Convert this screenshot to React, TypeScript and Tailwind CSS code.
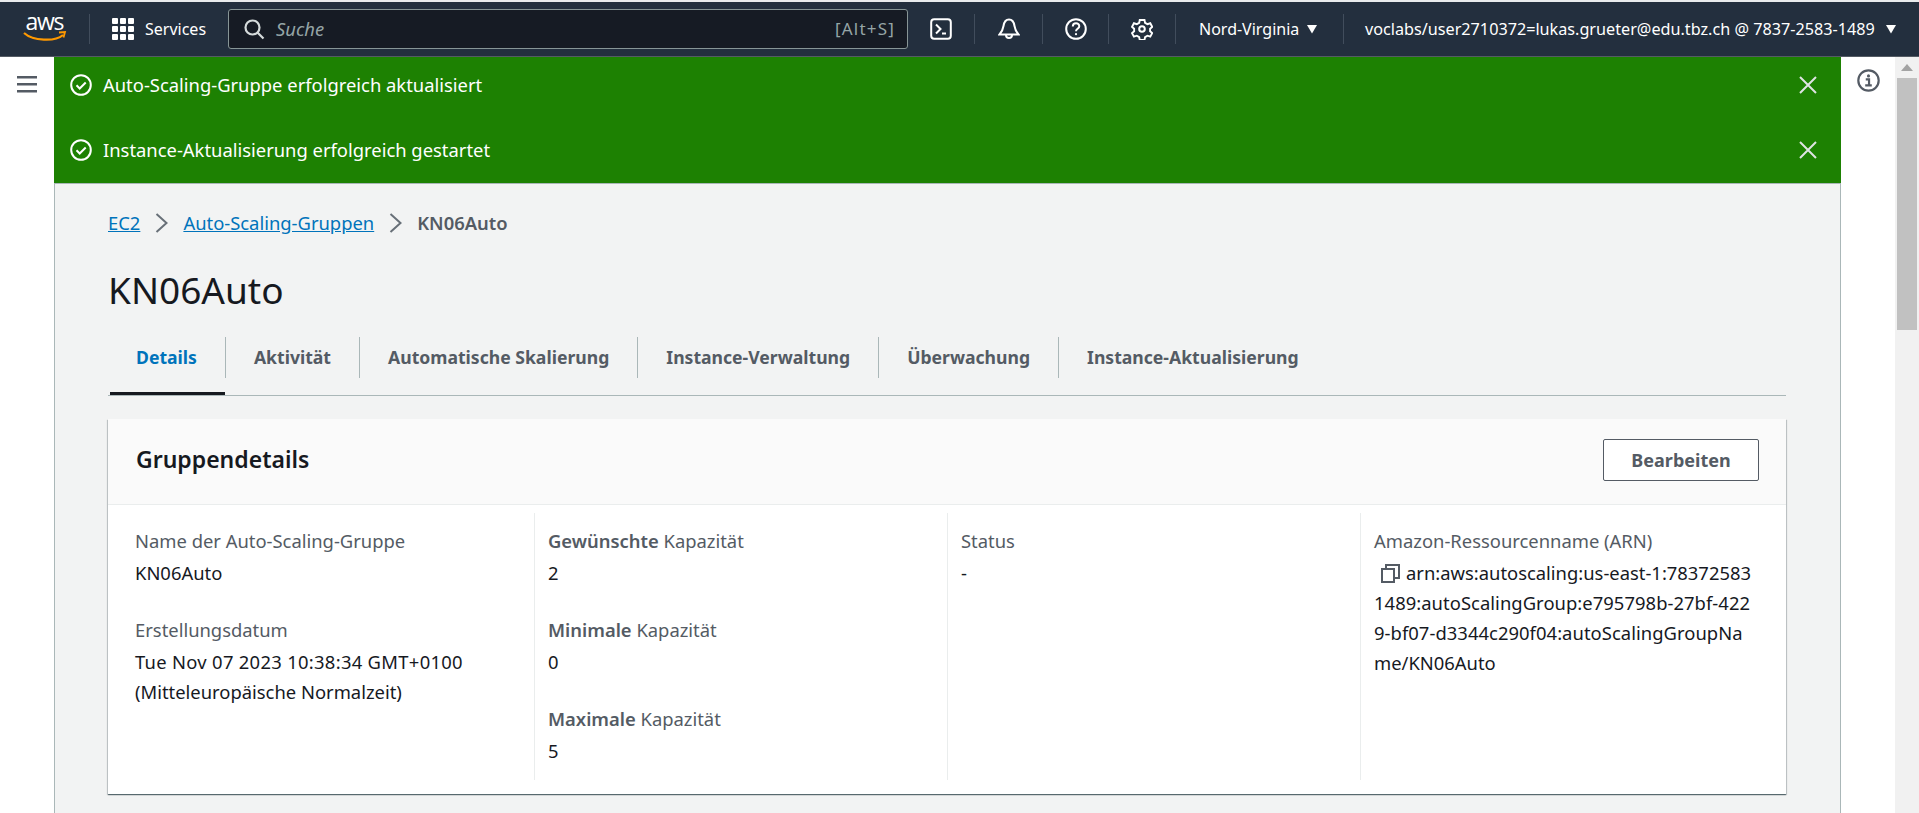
import React from 'react';

const NavDivider = () => <div className="w-px h-[30px] bg-[#414d5c] shrink-0" />;

const Caret = () => (
  <svg className="w-[12px] h-[10px] shrink-0" viewBox="0 0 12 10"><path d="M1 1h10L6 9.5z" fill="#fff" /></svg>
);

const CheckCircle = () => (
  <svg className="w-[22px] h-[22px] shrink-0" viewBox="0 0 22 22" fill="none" stroke="#fff" strokeWidth={2}>
    <circle cx="11" cy="11" r="9.8" />
    <path d="M6.5 11.3l3.2 3.2 6-6" />
  </svg>
);

const Chevron = () => (
  <svg className="w-[13px] h-[20px] mx-[15px] shrink-0" viewBox="0 0 13 20" fill="none" stroke="#687078" strokeWidth={2}>
    <path d="M1.500 1l10 9-10 9" />
  </svg>
);

const Flash = ({ text }: { text: string }) => (
  <div className="flex items-center h-[36px] pl-[16px] pr-[24px]">
    <CheckCircle />
    <span className="ml-[11px] text-white text-[18.4px]">{text}</span>
    <svg className="ml-auto w-[18px] h-[18px] shrink-0" viewBox="0 0 18 18" fill="none" stroke="#dfe3e3" strokeWidth={2}>
      <path d="M1 1l16 16M17 1L1 17" />
    </svg>
  </div>
);

const tabs = ['Details', 'Aktivität', 'Automatische Skalierung', 'Instance-Verwaltung', 'Überwachung', 'Instance-Aktualisierung'];

const Field = ({ label, children }: { label: React.ReactNode; children: React.ReactNode }) => (
  <div className="mb-[27px]">
    <div className="text-[#545b64] leading-[30px]">{label}</div>
    <div className="text-[#16191f] leading-[30px] mt-[2px]">{children}</div>
  </div>
);

export default function App() {
  return (
    <div className="h-[813px] overflow-hidden flex flex-col bg-white text-[18.4px]" style={{ fontFamily: '"Noto Sans", sans-serif' }}>
      <div className="h-[2px] bg-[#e9ebed] shrink-0" />
      <header className="h-[55px] shrink-0 bg-[#232f3e] border-b border-[#545b64] flex items-center text-white">
        <div className="w-[89px] flex justify-center pl-[1px] shrink-0">
          <svg className="w-[44px] h-[30px] overflow-visible" viewBox="0 0 44 30">
            <text x="22" y="16" textAnchor="middle" fill="#fff" fontSize="23" textLength="39" fontFamily="Open Sans, sans-serif">aws</text>
            <path d="M1 19c9 8 31 9 39 2" fill="none" stroke="#f90" strokeWidth="2.2" />
            <path d="M36 18.500l6-.5-1.500 5.500" fill="none" stroke="#f90" strokeWidth="1.800" />
          </svg>
        </div>
        <NavDivider />
        <div className="flex items-center ml-[22px] w-[116px] shrink-0">
          <svg className="w-[22px] h-[22px]" viewBox="0 0 22 22" fill="#fff">
            {[0, 8, 16].map(y => [0, 8, 16].map(x => <rect key={`${x}-${y}`} x={x} y={y} width="6" height="6" rx="1" />))}
          </svg>
          <span className="ml-[11px] text-[16px]">Services</span>
        </div>
        <div className="w-[680px] h-[40px] rounded-[3px] border border-[#879596] bg-[#161b24] flex items-center pl-[14px] pr-[12px] shrink-0">
          <svg className="w-[22px] h-[22px]" viewBox="0 0 22 22" fill="none" stroke="#d5dbdb" strokeWidth={2.2}>
            <circle cx="9.5" cy="9.5" r="7" />
            <path d="M14.5 14.5l6 6" />
          </svg>
          <span className="ml-[11px] italic text-[#95a5a6] text-[18.4px]">Suche</span>
          <span className="ml-auto text-[#95a5a6] text-[17px] tracking-[1.200px]">[Alt+S]</span>
        </div>
        <div className="w-[66px] flex justify-end pr-[22px] shrink-0">
          <svg className="w-[22px] h-[22px]" viewBox="0 0 22 22" fill="none" stroke="#fff" strokeWidth={2}>
            <rect x="1.2" y="1.2" width="19.6" height="19.6" rx="3" />
            <path d="M6 6.5l4.5 4.5L6 15.5M12 15.5h4" />
          </svg>
        </div>
        <NavDivider />
        <div className="w-[67px] flex justify-center shrink-0">
          <svg className="w-[22px] h-[24px]" viewBox="0 0 22 24" fill="none" stroke="#fff" strokeWidth={2}>
            <path d="M1.500 17.500h19c-2.500-3-3.500-5-4-8.500-.5-3.500-2.500-6.500-5.500-6.500S6 5.500 5.500 9c-.5 3.500-1.500 5.500-4 8.500z" />
            <path d="M8 18a3 3 0 0 0 6 0" />
          </svg>
        </div>
        <NavDivider />
        <div className="w-[65px] flex justify-center shrink-0">
          <svg className="w-[22px] h-[22px]" viewBox="0 0 22 22" fill="none" stroke="#fff" strokeWidth={2}>
            <circle cx="11" cy="11" r="9.8" />
            <path d="M7.800 8.500c0-4.300 6.500-4.300 6.500-.3 0 2.600-3.300 2.600-3.300 5" />
            <circle cx="11" cy="16.200" r="1.100" fill="#fff" stroke="none" />
          </svg>
        </div>
        <NavDivider />
        <div className="w-[66px] flex justify-center shrink-0">
          <svg className="w-[22px] h-[22px]" viewBox="0 0 22 22" fill="none" stroke="#fff" strokeWidth={2}>
            <path d="M8.500 1.500h5l.6 3 2.500 1.400 3-1 2 3.800-2.200 2 0 2.600 2.200 2-2 3.700-3-1-2.500 1.500-.6 3h-5l-.6-3-2.500-1.500-3 1-2-3.700 2.200-2v-2.600l-2.200-2 2-3.800 3 1 2.500-1.400z" transform="translate(.1 0) scale(.95) translate(.6 .6)" />
            <circle cx="11" cy="11" r="2.800" />
          </svg>
        </div>
        <NavDivider />
        <div className="w-[167px] flex items-center pl-[23px] shrink-0">
          <span className="text-[16px]">Nord-Virginia</span>
          <span className="ml-[7px]"><Caret /></span>
        </div>
        <NavDivider />
        <div className="flex items-center pl-[21px] whitespace-nowrap">
          <span className="text-[16.2px]">voclabs/user2710372=lukas.grueter@edu.tbz.ch @ 7837-2583-1489</span>
          <span className="ml-[10px]"><Caret /></span>
        </div>
      </header>

      <div className="flex flex-1 min-h-0">
        <aside className="w-[54px] shrink-0 flex justify-center pt-[19px]">
          <svg className="w-[20px] h-[17px]" viewBox="0 0 20 17" fill="#545b64">
            <rect width="20" height="2.500" y="0" />
            <rect width="20" height="2.500" y="7" />
            <rect width="20" height="2.500" y="14" />
          </svg>
        </aside>

        <main className="flex-1 min-w-0 bg-[#f2f3f3] border-x border-[#aab7b8]">
          <div className="bg-[#1d8102] h-[127px] pt-[10px] flex flex-col gap-[29px] -mx-px border-b border-[#aab7b8]">
            <Flash text="Auto-Scaling-Gruppe erfolgreich aktualisiert" />
            <Flash text="Instance-Aktualisierung erfolgreich gestartet" />
          </div>

          <div className="pl-[53px] pr-[54px]">
            <nav className="flex items-center h-[30px] mt-[24px]">
              <a className="text-[#0073bb] underline">EC2</a>
              <Chevron />
              <a className="text-[#0073bb] underline">Auto-Scaling-Gruppen</a>
              <Chevron />
              <span className="text-[#545b64] font-semibold">KN06Auto</span>
            </nav>

            <h1 className="text-[37px] leading-[50px] mt-[27px] text-[#16191f]">KN06Auto</h1>

            <div className="mt-[22px] h-[59px] border-b border-[#aab7b8] flex items-start">
              {tabs.map((t, i) => (
                <div key={t} className={`relative h-[41px] flex items-center px-[28px] text-[17.6px] font-bold whitespace-nowrap ${i < tabs.length - 1 ? 'border-r border-[#aab7b8]' : ''} ${i === 0 ? 'text-[#0073bb]' : 'text-[#545b64]'}`}>
                  {t}
                  {i === 0 && <div className="absolute left-[2px] right-0 top-[55px] h-[3px] bg-[#16191f]" />}
                </div>
              ))}
            </div>

            <section className="mt-[23px] bg-white shadow-[0_1px_1px_0_rgba(0,28,36,0.5),1px_1px_1px_0_rgba(0,28,36,0.15),-1px_1px_1px_0_rgba(0,28,36,0.15)]">
              <div className="h-[86px] bg-[#fafafa] border-b border-[#eaeded] flex items-center justify-between pl-[28px] pr-[27px] pb-[3px]">
                <h2 className="text-[23px] font-semibold text-[#16191f] pb-[2px]">Gruppendetails</h2>
                <button className="w-[156px] h-[42px] bg-white border border-[#545b64] rounded-[2px] text-[18px] text-[#545b64] font-bold">Bearbeiten</button>
              </div>
              <div className="grid grid-cols-4 px-[13px] pt-[8px] pb-[14px]">
                <div className="h-[267px] pl-[14px] pt-[13px]">
                  <Field label="Name der Auto-Scaling-Gruppe">KN06Auto</Field>
                  <Field label="Erstellungsdatum">
                    <span className="tracking-[0.300px]">Tue Nov 07 2023 10:38:34 GMT+0100</span><br />(Mitteleuropäische Normalzeit)
                  </Field>
                </div>
                <div className="h-[267px] pl-[13px] pt-[13px] border-l border-[#eaeded]">
                  <Field label={<><span className="font-semibold">Gewünschte</span> Kapazität</>}>2</Field>
                  <Field label={<><span className="font-semibold">Minimale</span> Kapazität</>}>0</Field>
                  <Field label={<><span className="font-semibold">Maximale</span> Kapazität</>}>5</Field>
                </div>
                <div className="h-[267px] pl-[13px] pt-[13px] border-l border-[#eaeded]">
                  <Field label="Status">-</Field>
                </div>
                <div className="h-[267px] pl-[13px] pt-[13px] border-l border-[#eaeded]">
                  <Field label="Amazon-Ressourcenname (ARN)">
                    <span className="flex items-center whitespace-nowrap">
                      <svg className="w-[19px] h-[19px] ml-[7px] mr-[6px] shrink-0" viewBox="0 0 19 19" fill="none" stroke="#545b64" strokeWidth={2}>
                        <rect x="1" y="5" width="12" height="13" />
                        <path d="M5 4.500V1h13v13h-4" />
                      </svg>
                      arn:aws:autoscaling:us-east-1:78372583
                    </span>
                    <span className="block whitespace-nowrap tracking-[0.050px]">1489:autoScalingGroup:e795798b-27bf-422</span>
                    <span className="block whitespace-nowrap tracking-[0.050px]">9-bf07-d3344c290f04:autoScalingGroupNa</span>
                    <span className="block whitespace-nowrap">me/KN06Auto</span>
                  </Field>
                </div>
              </div>
            </section>
          </div>
        </main>

        <aside className="w-[54px] shrink-0 flex justify-center pt-[12px]">
          <svg className="w-[23px] h-[23px]" viewBox="0 0 21 21" fill="none" stroke="#545b64" strokeWidth={2}>
            <circle cx="10.500" cy="10.500" r="9.300" />
            <circle cx="10.500" cy="6.300" r="1.400" fill="#545b64" stroke="none" />
            <path d="M8 9.500h3v5M7.500 15h6" strokeWidth={2} />
          </svg>
        </aside>

        <div className="w-[24px] shrink-0 bg-[#f1f1f1] flex flex-col items-center px-[2px]">
          <svg className="w-[12px] h-[7px] mt-[7px] shrink-0" viewBox="0 0 12 7"><path d="M6 0l6 7H0z" fill="#a3a3a3" /></svg>
          <div className="w-full h-[252px] mt-[7px] bg-[#c1c1c1]" />
        </div>
      </div>
    </div>
  );
}
